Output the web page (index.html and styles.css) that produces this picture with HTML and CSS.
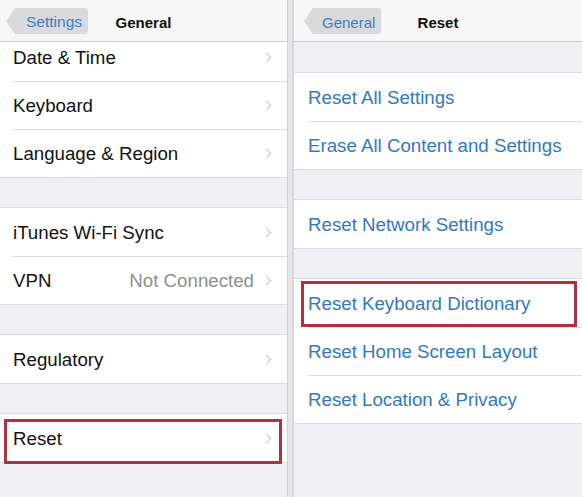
FILE: index.html
```html
<!DOCTYPE html>
<html>
<head>
<meta charset="utf-8">
<title>General / Reset</title>
<link rel="stylesheet" href="styles.css">
</head>
<body>
<div class="screens">
  <div class="pane pane_left">
    <div class="nav">
      <span class="back"><span class="back_txt">Settings</span></span>
      <span class="nav_tit">General</span>
    </div>
    <div class="body">
      <ul class="group first">
        <li class="row"><span class="lbl">Date &amp; Time</span><i class="chev"></i></li>
        <li class="row"><span class="lbl">Keyboard</span><i class="chev"></i></li>
        <li class="row"><span class="lbl">Language &amp; Region</span><i class="chev"></i></li>
      </ul>
      <ul class="group">
        <li class="row"><span class="lbl">iTunes Wi-Fi Sync</span><i class="chev"></i></li>
        <li class="row"><span class="lbl">VPN</span><span class="val">Not Connected</span><i class="chev"></i></li>
      </ul>
      <ul class="group">
        <li class="row"><span class="lbl">Regulatory</span><i class="chev"></i></li>
      </ul>
      <ul class="group">
        <li class="row mark"><span class="lbl">Reset</span><i class="chev"></i></li>
      </ul>
    </div>
  </div>
  <div class="split"></div>
  <div class="pane pane_right">
    <div class="nav">
      <span class="back"><span class="back_txt">General</span></span>
      <span class="nav_tit">Reset</span>
    </div>
    <div class="body">
      <ul class="group">
        <li class="row link"><span class="lbl">Reset All Settings</span></li>
        <li class="row link"><span class="lbl">Erase All Content and Settings</span></li>
      </ul>
      <ul class="group">
        <li class="row link"><span class="lbl">Reset Network Settings</span></li>
      </ul>
      <ul class="group">
        <li class="row link mark"><span class="lbl">Reset Keyboard Dictionary</span></li>
        <li class="row link"><span class="lbl">Reset Home Screen Layout</span></li>
        <li class="row link"><span class="lbl">Reset Location &amp; Privacy</span></li>
      </ul>
    </div>
  </div>
</div>
</body>
</html>
```

FILE: styles.css
```css
*, *:before, *:after { margin:0; padding:0; box-sizing:border-box;}
html,body{ width:582px; height:497px; overflow:hidden;}
body{ font:normal 18.7px/1 "Liberation Sans", Arial, sans-serif; color:#111; background:#efeff4;}
ul,li{ list-style:none;}

.screens{ display:flex; height:497px;}
.pane{ display:flex; flex-direction:column; background:#efeff4; overflow:hidden;}
.pane_left{ width:287px;}
.pane_right{ flex:1;}
.split{ width:7px; background:#e6e7eb; border-left:1px solid #cfd1d6; border-right:2px solid #d6d8dc;}

/* nav bar */
.nav{ position:relative; z-index:2; height:42px; padding-top:3px; background:#f7f7f8; border-bottom:1px solid #cfcfd3; display:flex; align-items:center; justify-content:center; flex-shrink:0;}
.nav_tit{ font-weight:bold; font-size:15px; color:#111;}
.back{ position:absolute; top:8px; height:26px; padding-top:2px; background:#dadadc; border-radius:0 3px 3px 0; display:flex; align-items:center;}
.back:before{ content:""; position:absolute; left:-9px; top:0; border-style:solid; border-width:13px 9px 13px 0; border-color:transparent #dadadc transparent transparent; box-sizing:content-box; width:0; height:0;}
.back_txt{ color:#3a7fca; font-size:15.5px;}
.pane_left .back{ left:15px; width:73px; padding-left:11px;}
.pane_right .back{ left:19px; width:68px; padding-left:9px;}
.pane_right .back_txt{ font-size:15px;}

/* lists */
.body{ flex:1; overflow:hidden;}
.group{ background:#fff; border-top:1px solid #dcdce0; border-bottom:1px solid #dcdce0; margin-top:29px;}
.group.first{ margin-top:-9px; border-top:none;}
.pane_right .group:first-child{ margin-top:30px;}
.row{ position:relative; height:48px; display:flex; align-items:center; padding:2px 14px 0 13px;}
.row + .row:after{ content:""; position:absolute; left:12px; right:0; top:0; border-top:1px solid #dcdce0;}
.lbl{ flex:1;}
.val{ color:#8e8e93; margin-right:9px;}
.chev{ width:7px; height:7px; margin-top:-2px; border-top:1.5px solid #c7c7cc; border-right:1.5px solid #c7c7cc; transform:rotate(45deg); margin-right:3px;}

.pane_right .row{ padding-left:14px;}
.pane_right .row + .row:after{ left:14px;}
.link .lbl{ color:#3079c6;}

/* red highlight boxes */
.mark:before{ content:""; position:absolute; z-index:1; border:3px solid #b3313e;}
.pane_left .mark:before{ left:4px; right:5px; top:5px; height:45px;}
.pane_right .mark:before{ left:7px; right:5px; top:2px; height:46px;}
```
